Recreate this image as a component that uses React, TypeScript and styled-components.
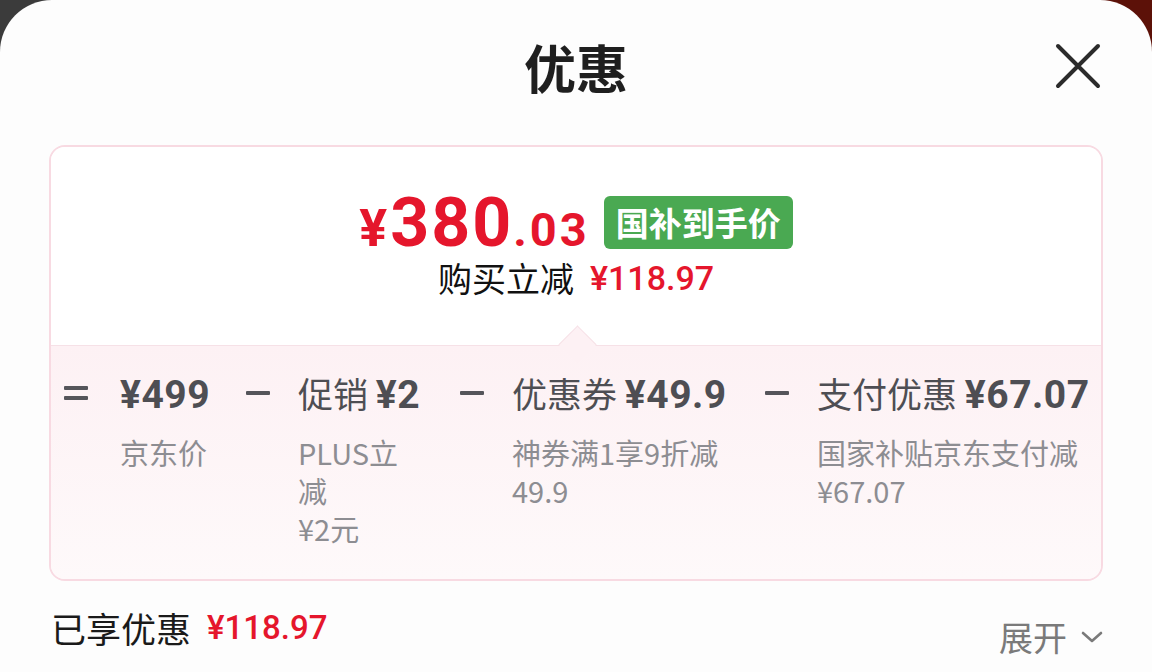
import React from 'react';
import styled, { createGlobalStyle } from 'styled-components';

const GlobalStyle = createGlobalStyle`
  html, body {
    margin: 0;
    padding: 0;
  }
  body {
    width: 1152px;
    height: 672px;
    overflow: hidden;
    background: linear-gradient(90deg, #3b3b3b 0%, #3b3b3b 50%, #5c1108 50%, #5c1108 100%);
    font-family: Roboto, "Noto Sans CJK SC", sans-serif;
  }
`;

const Sheet = styled.div`
  width: 1152px;
  height: 672px;
  box-sizing: border-box;
  background: #fdfdfd;
  border-radius: 52px 52px 0 0;
  padding: 0 49px;
  display: flex;
  flex-direction: column;
`;

const Header = styled.div`
  height: 145px;
  display: grid;
  grid-template-columns: 1fr auto 1fr;
  align-items: center;
  padding-bottom: 12px;
  box-sizing: border-box;
`;

const Title = styled.h1`
  grid-column: 2;
  margin: 0;
  font-family: "Noto Sans CJK SC", sans-serif;
  font-size: 52px;
  font-weight: 700;
  color: #1f1f1f;
  line-height: 60px;
`;

const CloseButton = styled.button`
  justify-self: end;
  margin-right: 1px;
  margin-bottom: 2px;
  width: 48px;
  height: 48px;
  padding: 0;
  border: none;
  background: none;
  display: flex;
  align-items: center;
  justify-content: center;
`;

const Card = styled.div`
  height: 436px;
  box-sizing: border-box;
  border: 2px solid #f8dae2;
  border-radius: 16px;
  display: flex;
  flex-direction: column;
`;

const Summary = styled.div`
  height: 198px;
  box-sizing: border-box;
  padding-top: 48px;
  background: #fff;
  border-radius: 14px 14px 0 0;
  display: flex;
  flex-direction: column;
  align-items: center;
`;

const PriceRow = styled.div`
  display: flex;
  align-items: center;
  gap: 14px;
  height: 54px;
`;

const Price = styled.div`
  height: 54px;
  color: #e5162c;
  font-weight: 700;
  display: flex;
  align-items: baseline;
  line-height: 54px;
  margin-top: 2px;
`;

const PricePart = styled.span<{ size: number; spacing: number }>`
  font-size: ${p => p.size}px;
  letter-spacing: ${p => p.spacing}px;
`;

const Badge = styled.span`
  background: #4aa952;
  color: #fff;
  font-family: "Noto Sans CJK SC", sans-serif;
  font-size: 33px;
  font-weight: 700;
  height: 53px;
  line-height: 53px;
  padding: 0 12px;
  border-radius: 6px;
`;

const SaveLine = styled.div`
  margin-top: 9px;
  display: flex;
  align-items: center;
  gap: 16px;
  font-size: 34px;
  line-height: 40px;
`;

const SaveLabel = styled.span`
  font-family: "Noto Sans CJK SC", sans-serif;
  color: #111;
`;

const RedAmount = styled.span<{ size?: number }>`
  color: #e5162c;
  font-weight: 500;
  font-size: ${p => (p.size ? `${p.size}px` : 'inherit')};
`;

const Breakdown = styled.div`
  flex: 1;
  position: relative;
  border-top: 1px solid #f6e1e7;
  border-radius: 0 0 14px 14px;
  background: linear-gradient(180deg, #fdf1f4 0%, #fef9fa 100%);
  padding: 23px 0 0 13px;
  display: flex;
  align-items: flex-start;

  &::before {
    content: '';
    position: absolute;
    left: 513px;
    top: -15px;
    width: 26px;
    height: 26px;
    background: #fdf1f4;
    border-top: 1px solid #f6e1e7;
    border-left: 1px solid #f6e1e7;
    transform: rotate(45deg);
  }
`;

const Op = styled.span<{ equals?: boolean }>`
  flex-shrink: 0;
  width: 24px;
  height: 48px;
  margin-right: ${p => (p.equals ? 32 : 28)}px;
  display: flex;
  flex-direction: column;
  justify-content: center;
  gap: 6px;

  &::before,
  &::after {
    content: '';
    display: block;
    height: 4px;
    border-radius: 1px;
    background: #55555a;
  }

  &::after {
    display: ${p => (p.equals ? 'block' : 'none')};
  }
`;

const Column = styled.div<{ w: number; last?: boolean }>`
  flex-shrink: 0;
  width: ${p => p.w}px;
  margin-right: ${p => (p.last ? 0 : 28)}px;
  display: flex;
  flex-direction: column;
  position: relative;
  z-index: 1;
`;

const Main = styled.div`
  font-family: "Noto Sans CJK SC", sans-serif;
  font-size: 35px;
  line-height: 48px;
  color: #4e4e53;
  white-space: nowrap;
`;

const Amount = styled.span`
  font-family: Roboto, "Noto Sans CJK SC", sans-serif;
  font-weight: 700;
  font-size: 39px;
  letter-spacing: 0.5px;
`;

const Sub = styled.div`
  margin-top: 14px;
  font-family: "Noto Sans CJK SC", sans-serif;
  font-size: 29px;
  line-height: 38px;
  color: #8d8d92;
`;

const Footer = styled.div`
  display: flex;
  justify-content: space-between;
  align-items: flex-start;
  padding-top: 25px;
`;

const Enjoyed = styled.div`
  display: flex;
  align-items: center;
  gap: 16px;
  font-size: 35px;
  line-height: 44px;
  margin-left: 2px;
`;

const EnjoyedLabel = styled.span`
  font-family: "Noto Sans CJK SC", sans-serif;
  color: #1a1a1a;
`;

const Expand = styled.div`
  margin-top: 9px;
  display: flex;
  align-items: center;
  gap: 14px;
  font-family: "Noto Sans CJK SC", sans-serif;
  font-size: 34px;
  line-height: 44px;
  color: #7a7a7a;
`;

const items = [
  { w: 98, label: '', amount: '¥499', sub: ['京东价'] },
  { w: 134, label: '促销 ', amount: '¥2', sub: ['PLUS立', '减', '¥2元'] },
  { w: 225, label: '优惠券 ', amount: '¥49.9', sub: ['神券满1享9折减', '49.9'] },
  { w: 276, label: '支付优惠 ', amount: '¥67.07', sub: ['国家补贴京东支付减', '¥67.07'] },
];

const App: React.FC = () => {
  return (
    <>
      <GlobalStyle />
      <Sheet>
        <Header>
          <Title>优惠</Title>
          <CloseButton aria-label="close">
            <svg width="46" height="46" viewBox="0 0 46 46">
              <path d="M3 3 L43 43 M43 3 L3 43" stroke="#2b2b2b" strokeWidth="4" strokeLinecap="round" />
            </svg>
          </CloseButton>
        </Header>

        <Card>
          <Summary>
            <PriceRow>
              <Price>
                <PricePart size={52} spacing={3}>¥</PricePart>
                <PricePart size={68} spacing={2}>380</PricePart>
                <PricePart size={47} spacing={3}>.03</PricePart>
              </Price>
              <Badge>国补到手价</Badge>
            </PriceRow>
            <SaveLine>
              <SaveLabel>购买立减</SaveLabel>
              <RedAmount>¥118.97</RedAmount>
            </SaveLine>
          </Summary>

          <Breakdown>
            <Op equals />
            {items.map((item, i) => (
              <React.Fragment key={i}>
                {i > 0 && <Op />}
                <Column w={item.w} last={i === items.length - 1}>
                  <Main>
                    {item.label}
                    <Amount>{item.amount}</Amount>
                  </Main>
                  <Sub>
                    {item.sub.map((line, j) => (
                      <div key={j}>{line}</div>
                    ))}
                  </Sub>
                </Column>
              </React.Fragment>
            ))}
          </Breakdown>
        </Card>

        <Footer>
          <Enjoyed>
            <EnjoyedLabel>已享优惠</EnjoyedLabel>
            <RedAmount size={33}>¥118.97</RedAmount>
          </Enjoyed>
          <Expand>
            展开
            <svg width="22" height="14" viewBox="0 0 22 14">
              <path d="M2 3 L11 11 L20 3" fill="none" stroke="#7a7a7a" strokeWidth="2.6" strokeLinecap="round" strokeLinejoin="round" />
            </svg>
          </Expand>
        </Footer>
      </Sheet>
    </>
  );
};

export default App;
